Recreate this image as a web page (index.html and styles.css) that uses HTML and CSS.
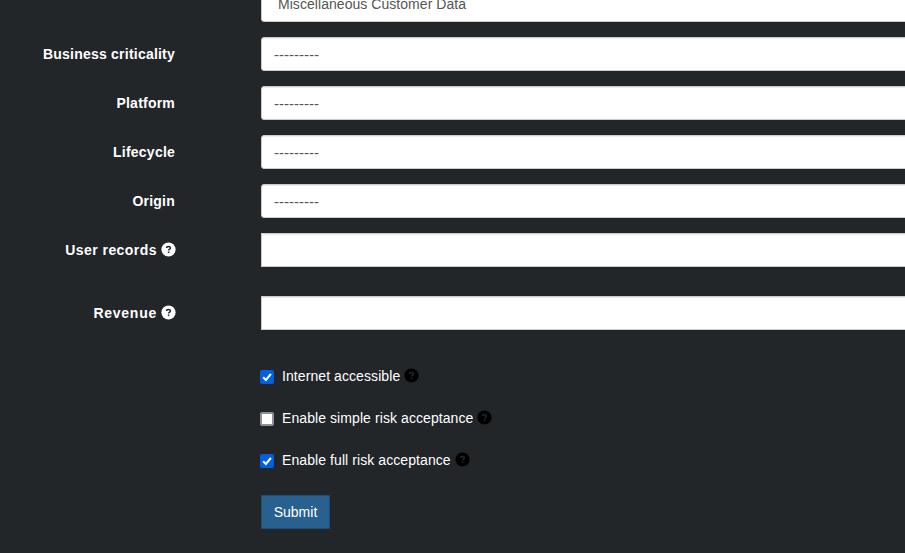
FILE: index.html
```html
<!DOCTYPE html>
<html lang="en">
<head>
<meta charset="utf-8">
<title>Product</title>
<link rel="stylesheet" href="styles.css">
</head>
<body>
<svg width="0" height="0" class="defs" aria-hidden="true">
  <symbol id="help" viewBox="0 0 15 15">
    <circle class="disc" cx="7.5" cy="7.5" r="7.1"/>
    <path class="mark" d="M5.6 6C5.6 5 6.3 4.5 7.5 4.5S9.4 5 9.4 5.9C9.4 7 7.6 7.1 7.6 8.5M7.6 9.6V11"/>
  </symbol>
</svg>
<form class="form">
  <div class="row"><span class="label"></span><div class="control select padded">Miscellaneous Customer Data</div></div>
  <div class="row"><span class="label">Business criticality</span><div class="control select dashes">---------</div></div>
  <div class="row"><span class="label">Platform</span><div class="control select dashes">---------</div></div>
  <div class="row"><span class="label">Lifecycle</span><div class="control select dashes">---------</div></div>
  <div class="row"><span class="label">Origin</span><div class="control select dashes">---------</div></div>
  <div class="row spaced"><span class="label records">User records<svg class="help"><use href="#help"/></svg></span><div class="control"></div></div>
  <div class="row spaced"><span class="label revenue">Revenue<svg class="help"><use href="#help"/></svg></span><div class="control"></div></div>
  <div class="checks">
    <div class="check"><svg class="box on" viewBox="0 0 14 14"><rect width="14" height="14" rx="2"/><path d="M3.2 7.3L5.9 10L10.9 4"/></svg><span>Internet accessible</span><svg class="help dark"><use href="#help"/></svg></div>
    <div class="check"><svg class="box off" viewBox="0 0 14 14"><rect x="1" y="1" width="12" height="12" rx="1"/></svg><span>Enable simple risk acceptance</span><svg class="help dark"><use href="#help"/></svg></div>
    <div class="check"><svg class="box on" viewBox="0 0 14 14"><rect width="14" height="14" rx="2"/><path d="M3.2 7.3L5.9 10L10.9 4"/></svg><span>Enable full risk acceptance</span><svg class="help dark"><use href="#help"/></svg></div>
  </div>
  <button class="submit" type="button">Submit</button>
</form>
</body>
</html>
```

FILE: styles.css
```css
* { box-sizing: border-box; }
body {
  margin: 0;
  height: 553px;
  overflow: hidden;
  background: #222629;
  color: #fff;
  font: 14px/20px "Liberation Sans", Arial, sans-serif;
}
.defs { display: block; }
.form { margin-top: -12px; }
.row {
  display: grid;
  grid-template-columns: 176px 660px;
  column-gap: 85px;
  height: 34px;
  margin-bottom: 15px;
}
.spaced { margin-bottom: 29px; }
.label {
  display: flex;
  align-items: center;
  justify-content: flex-end;
  padding-right: 1px;
  font-weight: 700;
  letter-spacing: .22px;
  white-space: nowrap;
}
.records { padding-right: 0; letter-spacing: .45px; }
.revenue { padding-right: 0; letter-spacing: .75px; }
.help {
  width: 15px;
  height: 15px;
  margin: -1px 0 0 4px;
  flex: none;
  --disc: #fff;
  --mark: #222629;
}
.dark { --disc: #000; --mark: #222629; }
.disc { fill: var(--disc); }
.mark { fill: none; stroke: var(--mark); stroke-width: 1.5; }
.control {
  height: 34px;
  padding: 6px 12px;
  background: #fff;
  border: 1px solid #ccc;
  box-shadow: inset 0 1px 1px rgba(0, 0, 0, .075);
  color: #555;
  white-space: nowrap;
}
.select { border-radius: 3px; }
.padded { padding: 5px 12px 7px 16px; letter-spacing: .05px; }
.dashes { padding: 7px 12px 5px; font-size: 15px; }
.checks { padding: 7px 0 0 260px; }
.check {
  display: flex;
  align-items: center;
  height: 20px;
  margin-bottom: 22px;
  letter-spacing: .08px;
}
.box { width: 14px; height: 14px; margin: 2px 8px 0 0; flex: none; }
.on rect { fill: #0060df; }
.on path { fill: none; stroke: #fff; stroke-width: 2; }
.off rect { fill: #fff; stroke: #8f8f9d; stroke-width: 2; }
.submit {
  display: block;
  width: 69px;
  height: 34px;
  margin: 25px 0 0 261px;
  padding: 0;
  background: #286090;
  border: 1px solid #204d74;
  color: #fff;
  font: inherit;
}
```
